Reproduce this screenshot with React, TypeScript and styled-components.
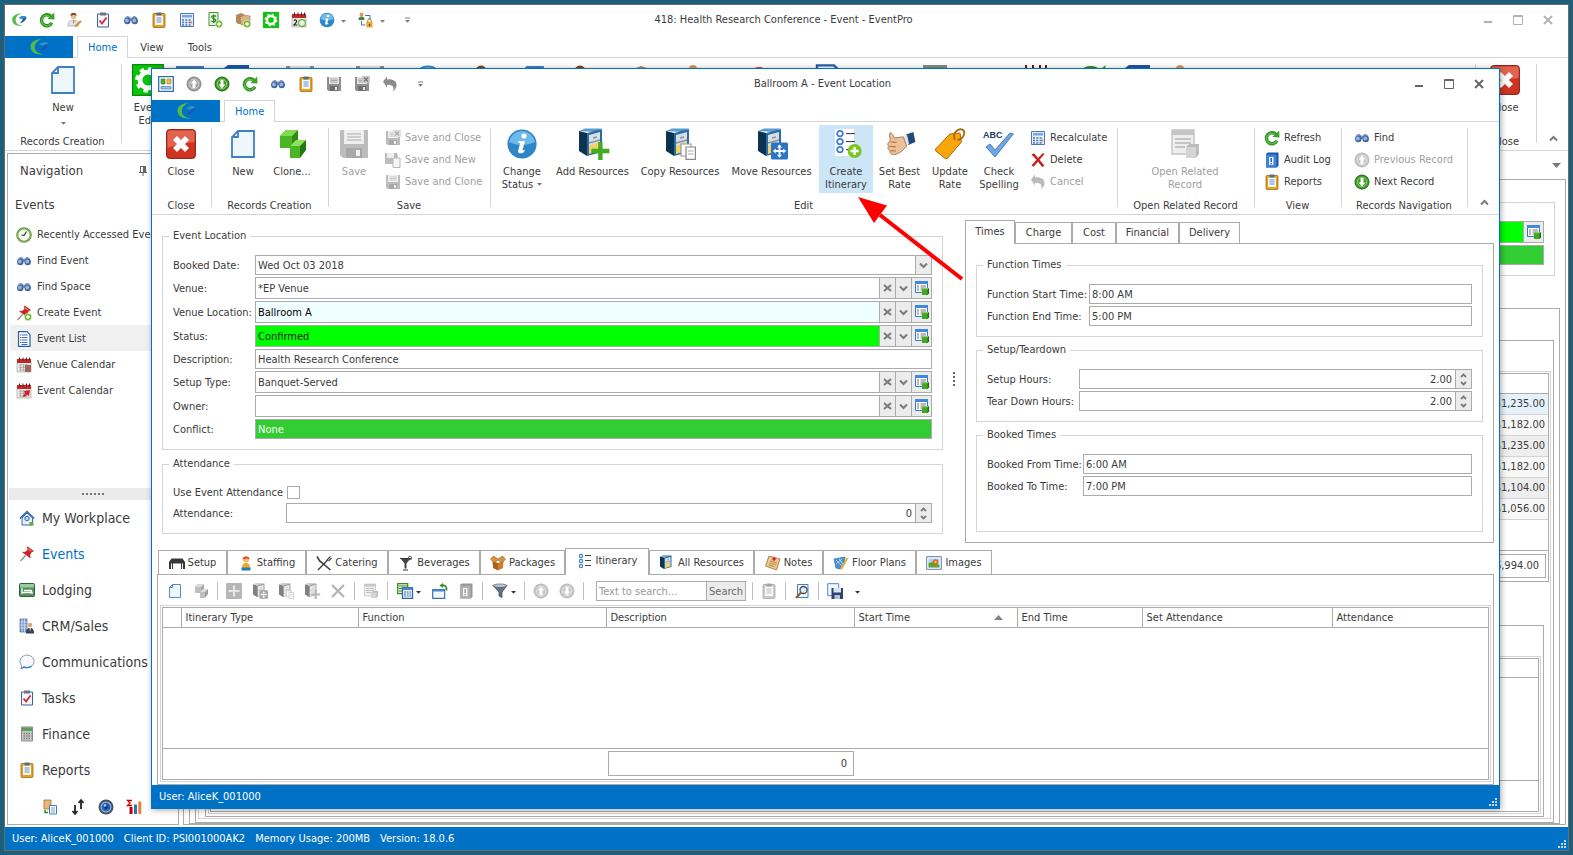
import React, { ReactNode } from 'react';
import styled, { createGlobalStyle, css } from 'styled-components';

const c = {
  desk: '#1e5f7c',
  frame: '#6b6b6b',
  blue: '#0072c6',
  line: '#d4d4d4',
  edge: '#ababab',
  text: '#3b3b3b',
  mute: '#a0a0a0',
  glyph: '#7a7a7a',
  btn: '#ececec',
};

const GlobalStyle = createGlobalStyle`
  * { box-sizing: border-box; }
  body {
    margin: 0;
    background: ${c.desk};
    color: ${c.text};
    font: 11px/14px "DejaVu Sans Condensed", "Noto Sans", sans-serif;
  }
  button, input, select { font: inherit; color: inherit; margin: 0; }
  button { padding: 0; border: 0; background: none; }
  ul { list-style: none; margin: 0; padding: 0; }
`;

/* ---------- Icons ---------- */

const cubes = (
  <>
    <path d="M2 4l3-3h6v6l-3 3H2z" fill="#2f8a14" />
    <path d="M2 4l3-3h6L8 4z" fill="#7fdc4f" />
    <path d="M2 4h6v6H2z" fill="#4cb526" />
    <path d="M7 9l3-3h5v5l-3 4H7z" fill="#26760f" />
    <path d="M7 9l3-3h5l-3 3z" fill="#8be45c" />
    <path d="M7 9h5v6H7z" fill="#4cb526" />
  </>
);
const floppy = (
  <>
    <path d="M1 1h14v14H2.500L1 13.500z" fill="#8f8f8f" />
    <path d="M3 1h10v7H3z" fill="#e4e4e4" />
    <path d="M4.500 3h7M4.500 4.500h7M4.500 6h7" stroke="#9a9a9a" strokeWidth=".8" />
    <path d="M4 10h8v5H4z" fill="#6e6e6e" />
    <path d="M9 11h2v3H9z" fill="#e8e8e8" />
  </>
);
const cabinet = (
  <>
    <path d="M1 1.500L4 .3h8.500L9 2z" fill="#5b9bd0" />
    <path d="M1 1.500l4 1V14L1 11.500z" fill="#0c3350" />
    <path d="M5 2.500l7.500-2V12L5 14z" fill="#2c6ea3" />
    <path d="M6 3.500l5.500-1.500v9.300L6 12.800z" fill="#d7dee4" />
    <path d="M6 7.500l5.500-1.500M8 5l2-.5M8 9l2-.5" stroke="#8494a0" strokeWidth=".7" />
    <path d="M6 9l5-2v4.500L6 13z" fill="#f3d164" />
  </>
);
const clipboard = (
  <>
    <rect x="2" y="1.500" width="12" height="14" rx="1" fill="#e3a21f" stroke="#a8690a" strokeWidth=".8" />
    <path d="M4 3.500h8v9.500H4z" fill="#f4f8fd" />
    <path d="M5.500 .5h5v3h-5z" fill="#5a6b85" />
    <path d="M5.500 6h5M5.500 8h5M5.500 10h5" stroke="#6f93c4" strokeWidth="1" />
  </>
);
const calRed = (
  <>
    <path d="M1 4h14v11H1z" fill="#e9e9e9" stroke="#9a9a9a" strokeWidth=".6" />
    <path d="M1 2h14v4H1z" fill="#c22727" />
    <path d="M3.500 .5v3M7 .5v3M10.500 .5v3M13.500 .5v3" stroke="#6d1414" strokeWidth="1" />
  </>
);
const calGrid = <path d="M3 8h10M3 10.500h10M3 13h10M4.500 7v7M7.500 7v7M10.500 7v7" stroke="#9e9e9e" strokeWidth=".7" />;
const doc = (
  <path d="M5.500 1.500h8v13h-11v-10z M5.500 1.500v3h-3" fill="#eef6fe" stroke="#3f7fc4" strokeWidth=".9" />
);
const pin = (
  <>
    <path d="M1.500 15l5-5.500" stroke="#8a8a8a" strokeWidth="1.200" />
    <path d="M8.500 .8l6 4.200-2.300 1.300-1.500 3 .8 2.700-8-5.800 2.500.1 2.500-2z" fill="#d42020" stroke="#8f1010" strokeWidth=".5" />
    <path d="M8.500 1.800l4.500 3.100-1.500.6-3.300-2.300z" fill="#f07a70" />
  </>
);
const addBadge = (
  <>
    <circle cx="12" cy="12" r="3.700" fill="#6fb927" stroke="#fff" strokeWidth=".5" />
    <path d="M12 10v4M10 12h4" stroke="#fff" strokeWidth="1.300" />
  </>
);
const tableSheet = (
  <>
    <path d="M1.500 1.500h12v11h-12z" fill="#fff" stroke="#2d7ad1" />
    <path d="M1 1h13v3H1z" fill="#3c8be0" />
    <path d="M3 6h2M6.500 6h5.500M3 8h2M6.500 8h5.500M3 10h2M6.500 10h5.500" stroke="#777" strokeWidth="1" />
  </>
);
const swoosh = (
  <>
    <path d="M10.500 1.500C5 1.500 1 4 1.200 8c.2 4.500 5 6.800 10.800 5.700C7.500 13.500 4.600 11.500 4.600 8c0-3 2.400-5.500 5.900-6.500z" fill="#55b948" />
    <path d="M8 6c2-2.500 5.500-2.700 7.500-.8-.3 3-3 5.300-7 6 1.800-1.300 2.800-2.500 3-4.200z" fill="#1b57ad" />
    <path d="M8 6c2-2.500 5.500-2.700 7.500-.8L11.300 7z" fill="#2e91c9" />
  </>
);
const circleArrow = (fill: string, ring: string, d: string) => (
  <>
    <circle cx="8" cy="8" r="7" fill={fill} stroke={ring} />
    <circle cx="8" cy="8" r="4.700" fill="none" stroke="#fff" strokeOpacity=".45" />
    <path d={d} fill="#fff" />
  </>
);
const upArrow = 'M8 3.500l3.500 4H9.500v4.500h-3V7.500H4.500z';
const downArrow = 'M8 12.500l3.500-4H9.500V4h-3v4.500H4.500z';

const art: Record<string, ReactNode> = {
  logo: swoosh,
  refresh: (
    <>
      <path d="M12.800 10.800a5.500 5.500 0 1 1-.8-6.300" fill="none" stroke="#2f8f22" strokeWidth="3.400" />
      <path d="M12.500 10.500a5.200 5.200 0 1 1-1-5.500" fill="none" stroke="#63c04a" strokeWidth="1.200" />
      <path d="M8.300 7L15.500 7.500 15.200 .5z" fill="#3aa528" />
    </>
  ),
  userEdit: (
    <>
      <circle cx="6.500" cy="4" r="3" fill="#e8bd8b" />
      <path d="M3.500 4a3 3.200 0 0 1 6 0c-1-1.500-4-1.500-6 0z" fill="#7a4a1c" />
      <path d="M1 14c0-4 2-6 5.500-6s5 2 5 6z" fill="#e0e6ee" stroke="#8a95a5" strokeWidth=".6" />
      <path d="M6 8.500l.7 4 .8-4z" fill="#b05a20" />
      <path d="M8 14.500l6-5.500" stroke="#e08a2c" strokeWidth="2" />
    </>
  ),
  task: (
    <>
      <path d="M2.500 2h11v13h-11z" fill="#f2f6fc" stroke="#3e6396" />
      <path d="M5 .5h6v3H5z" fill="#6d7480" />
      <path d="M4.500 8.500l2.500 3 4.500-6" fill="none" stroke="#d22b2b" strokeWidth="1.800" />
    </>
  ),
  binoculars: (
    <>
      <path d="M2.500 5l2.500-1.200L8 6l3-2.200L13.500 5l1.500 4H1z" fill="#6f8fbd" />
      <circle cx="4.300" cy="9" r="3.200" fill="#44659a" />
      <circle cx="11.700" cy="9" r="3.200" fill="#44659a" />
      <circle cx="3.900" cy="8.500" r="1.900" fill="#93b6de" />
      <circle cx="11.300" cy="8.500" r="1.900" fill="#93b6de" />
    </>
  ),
  clipboard,
  calc: (
    <>
      <path d="M1.500 1.500h13v13h-13z" fill="#e6effa" stroke="#4a78b8" />
      <path d="M3 3h10v2.500H3z" fill="#7da7dc" />
      <path d="M3 8h10M3 10.500h10M3 13h10" stroke="#4a78b8" strokeWidth="1.500" strokeDasharray="2 1.300" />
      <path d="M11 9.700h2.200v1.600H11z" fill="#e07a2c" />
    </>
  ),
  dollar: (
    <>
      <path d="M2 .5h9v13H2z" fill="#e8f4e4" stroke="#4a8f3c" />
      <path d="M9 4.500C8 3.200 4.500 3.500 4.700 5.200 5 7 8.800 6.200 8.800 8.300 8.600 10 5.500 10.200 4.300 8.800M6.700 2.500v8.500" fill="none" stroke="#2e8a22" strokeWidth="1.300" />
      {addBadge}
    </>
  ),
  boxes: (
    <>
      <path d="M1 3l5-2 3 1v10H3L1 10z" fill="#b58a5a" />
      <path d="M5 5l4-2 6 1v9H6z" fill="#d9b485" stroke="#94683a" strokeWidth=".5" />
      {addBadge}
    </>
  ),
  gear: (
    <>
      <path d="M.3.300h15.400v15.400H.3z" fill="#0ac50a" stroke="#0a8a0a" strokeWidth=".6" />
      <circle cx="8" cy="8" r="4" fill="none" stroke="#fff" strokeWidth="2.400" />
      <circle cx="8" cy="8" r="5.600" fill="none" stroke="#fff" strokeWidth="1.600" strokeDasharray="2.200 2.200" />
    </>
  ),
  calDay: (
    <>
      {calRed}
      <path d="M3 8.500c1.500-1.500 3.500 0 2.200 1.800L3 13h3.500" fill="none" stroke="#222" strokeWidth="1.200" />
      <circle cx="11" cy="11" r="3.400" fill="#e5f4d8" stroke="#6fae3a" strokeWidth="1.200" />
    </>
  ),
  info: (
    <>
      <circle cx="8" cy="8" r="7.300" fill="#2f86c6" />
      <path d="M1.500 7a6.600 6.600 0 0 1 13 0c-4 2-9 2-13 0z" fill="#6fb9ea" />
      <circle cx="9" cy="4" r="1.300" fill="#fff" />
      <path d="M6.300 6.500h3.200L8.200 11.300l1.200-.4-.4 1.200c-1.500.9-3.300.7-2.900-.9l1-3.700h-1z" fill="#fff" />
    </>
  ),
  orgLock: (
    <>
      <circle cx="3.500" cy="2.500" r="2" fill="#d39a5c" />
      <path d="M.5 8c0-2.500 1-3.500 3-3.500s3 1 3 3.500z" fill="#47853a" />
      <path d="M7 3.500h5v4M3.500 9v4h4" fill="none" stroke="#3e73b5" />
      <path d="M9.800 10V8.500a1.700 1.700 0 0 1 3.400 0V10" fill="none" stroke="#a0701c" />
      <path d="M8.500 10h6v5.500h-6z" fill="#efa12d" />
      <path d="M11.500 12v2" stroke="#6b3f00" />
    </>
  ),
  form: (
    <>
      <path d="M.7.700h14.600v14.600H.7z" fill="#fff" stroke="#2f6fb0" strokeWidth="1.300" />
      <path d="M3 3h4v5H3z" fill="#58a83a" stroke="#2f7a1a" strokeWidth=".6" />
      <path d="M9 3h4v5H9z" fill="#f2b84a" stroke="#a87a1a" strokeWidth=".6" />
      <path d="M3 10.500h10v2.500H3z" fill="#9cc3ec" stroke="#3a70b0" strokeWidth=".6" />
    </>
  ),
  up: circleArrow('#a2a2a2', '#858585', upArrow),
  down: circleArrow('#3a9d1f', '#1f6b10', downArrow),
  downGrey: circleArrow('#a2a2a2', '#858585', downArrow),
  floppy,
  floppyX: (
    <>
      {floppy}
      <path d="M8 0h8v7H8z" fill="#c9c9c9" />
      <path d="M10 1.500l4 4M14 1.500l-4 4" stroke="#777" strokeWidth="1.300" />
    </>
  ),
  floppyDoc: (
    <>
      <path d="M0 1h12v11H0z" fill="#8f8f8f" />
      <path d="M2 1h7v5H2z" fill="#e4e4e4" />
      <path d="M8 6h7v9.500H8z" fill="#f1f1f1" stroke="#8a8a8a" />
      <path d="M12 2v4" stroke="#777" />
    </>
  ),
  undo: (
    <path d="M1 5.500l4-5v3c5.500-.8 9.500 1.500 9.500 5.500 0 2.700-1.500 4.700-3.500 6.500 1.500-4.500 0-7-6-6.800v3z" fill="#8c8c8c" />
  ),
  closeRed: (
    <>
      <rect x=".8" y=".8" width="14.400" height="14.400" rx="1.500" fill="#cf3421" stroke="#8a1a0e" strokeWidth=".5" />
      <path d="M1.200 2.200q0-1 1-1h11.600q1 0 1 1V7q-7 .5-13.600 3z" fill="#e2634f" />
      <path d="M5 5l6 6M11 5l-6 6" stroke="#fff" strokeWidth="2.800" />
    </>
  ),
  doc,
  cubes,
  cabinet,
  cabinetAdd: (
    <>
      {cabinet}
      <path d="M11.700 7v9M7.200 11.500h9" stroke="#42ab22" strokeWidth="2.200" />
    </>
  ),
  cabinetCopy: (
    <>
      {cabinet}
      <path d="M8.500 8h5v6h-5z" fill="#fff" stroke="#999" strokeWidth=".6" />
      <path d="M11 9.500h4.700v6.200H11z" fill="#fff" stroke="#888" strokeWidth=".6" />
      <path d="M12 11.500h2.700M12 13h2.700" stroke="#aaa" strokeWidth=".6" />
    </>
  ),
  cabinetMove: (
    <>
      {cabinet}
      <rect x="7.500" y="7.300" width="8.500" height="8.500" rx=".8" fill="#2b76c4" />
      <path d="M11.750 8.800v5.500M9 11.500h5.500" stroke="#fff" strokeWidth=".9" />
      <path d="M10.500 9.700l1.250-1.500L13 9.700zM10.500 13.400l1.250 1.500 1.250-1.500zM9.900 10.200l-1.500 1.300 1.500 1.300zM13.600 10.200l1.500 1.300-1.500 1.300z" fill="#fff" />
    </>
  ),
  itinAdd: (
    <>
      <path d="M2.500 .5H12V14H2.500z" fill="#fff" />
      <g fill="none" stroke="#3f7fd0" strokeWidth=".9">
        <circle cx="5" cy="2.800" r="1.400" />
        <circle cx="5" cy="6.800" r="1.400" />
        <circle cx="5" cy="10.800" r="1.400" />
      </g>
      <path d="M8 2.800h4.500M8 6.800h4.500M8 10.800h1" stroke="#333" strokeWidth=".5" />
      <circle cx="12.300" cy="11.500" r="3.500" fill="#79c61e" />
      <path d="M12.300 9.500v4M10.300 11.500h4" stroke="#fff" strokeWidth="1.200" />
    </>
  ),
  itin: (
    <>
      <g fill="none" stroke="#3f7fd0" strokeWidth="1.200">
        <circle cx="4" cy="3" r="1.600" />
        <circle cx="4" cy="8" r="1.600" />
        <circle cx="4" cy="13" r="1.600" />
      </g>
      <path d="M8 2.500h6M8 7.500h6M8 12.500h6" stroke="#444" strokeWidth="1" />
    </>
  ),
  thumb: (
    <>
      <path d="M11 3.300L14.700 2l1 5-3.500 1.500z" fill="#234a7c" />
      <path d="M10 4.200l1.500-.8 1 4.500-1.500 1z" fill="#dfe7f2" />
      <path d="M3 2.500c.8-.5 1.500.8 2.200 2.500l4.500-.6L11.300 9c-1.500 2-3.500 4-6.500 4.300-1.500 0-2-1-1.700-2-1.200-.4-1.500-1.300-.7-2.200-.9-.8-.6-1.800.5-2.200C3.500 5.500 2.300 3.500 3 2.500z" fill="#ecc09a" stroke="#9c6437" strokeWidth=".4" />
      <path d="M3.300 7l3 .2M2.800 9.200l3.200.2M3.500 11.300l2.500.2" stroke="#b0764a" strokeWidth=".6" />
    </>
  ),
  tag: (
    <>
      <path d="M.8 10.500L8 3l5-.5.700 4.500-7 8.200-.9.200L.9 11.500z" fill="#fba50d" stroke="#a8690a" strokeWidth=".5" />
      <path d="M10.500 6C8.800 2.500 12 0 14.200 .8c1.800 1 .8 4.700-2.500 5.200" fill="none" stroke="#a8690a" strokeWidth=".9" />
    </>
  ),
  spell: (
    <>
      <text x="0" y="5" fontSize="4.500" fontWeight="700" fontFamily="Liberation Sans, sans-serif" fill="#23395f">ABC</text>
      <path d="M1.500 9.500l2-1.500 2.500 3L13.500 2.500l1.700.5L6 14.500z" fill="#6fa6e4" stroke="#2d69b3" strokeWidth=".4" />
    </>
  ),
  del: <path d="M1.500 2.500l2.500-1.200 4 4.700L13 1l1.500 1L9.500 7.700l5 6-2.300 1.200L8 9.700 3.500 14.800 1.500 13.500l5-5.800z" fill="#c91d1d" />,
  delGrey: <path d="M2 2l12 12M14 2L2 14" stroke="#808080" strokeWidth="2.200" />,
  related: (
    <>
      <path d="M1.500 1h11v12h-11z" fill="#e3e3e3" stroke="#9a9a9a" strokeWidth=".7" />
      <path d="M1.500 1h11v2.500h-11z" fill="#9f9f9f" />
      <path d="M3 5.500h8M3 7.500h8M3 9.500h5" stroke="#888" strokeWidth=".8" />
      <path d="M8.500 9.500l1.500-1.500h5v5L13.500 15h-5z" fill="#8f8f8f" />
      <path d="M8.500 9.500h5V15h-5z" fill="#b8b8b8" />
    </>
  ),
  audit: (
    <>
      <path d="M2 2l2-1.500h10.500v13L13 15.500H2z" fill="#1f55a8" />
      <path d="M2 2.500h10.500v13H2z" fill="#3d84d8" />
      <path d="M5 5h4.500v8H5z" fill="#eaf3fd" />
      <path d="M7.200 6v4M7.200 11v1.200" stroke="#1f55a8" strokeWidth="1.400" />
    </>
  ),
  lookup: (
    <>
      {tableSheet}
      <path d="M8 9.500L9.500 8H15v5.500L13.500 15H8z" fill="#256e10" />
      <path d="M8 9.500h5.500V15H8z" fill="#43a821" />
      <path d="M8 9.500L9.500 8H15l-1.500 1.500z" fill="#7fd65a" />
    </>
  ),
  clock: (
    <>
      <circle cx="8" cy="8" r="6.800" fill="#f4f8ee" stroke="#5d8f35" strokeWidth="2" />
      <circle cx="8" cy="8" r="6.800" fill="none" stroke="#a8cd86" strokeWidth=".6" />
      <path d="M10.500 4.500L8 8.500 5.500 8" fill="none" stroke="#444" strokeWidth="1.200" />
    </>
  ),
  pinAdd: (
    <>
      {pin}
      {addBadge}
    </>
  ),
  pin,
  list: (
    <>
      <path d="M2.500 .7h8.500l3 3v11.600H2.500z" fill="#fff" stroke="#2460a8" strokeWidth="1.200" />
      <path d="M5.500 4h6M5.500 6.500h6M5.500 9h6M5.500 11.500h6M5.500 13.500h6" stroke="#2d6cd0" strokeWidth="1.200" />
      <path d="M4 4h1M4 6.500h1M4 9h1M4 11.500h1" stroke="#c33" strokeWidth="1.200" />
    </>
  ),
  calVenue: (
    <>
      {calRed}
      {calGrid}
      <path d="M9 8h6v7H9z" fill="#a5655a" />
    </>
  ),
  calEvent: (
    <>
      {calRed}
      {calGrid}
      <path d="M6.500 13.500l2.500-3-1.200-2.300L14 7l-1 6-2-1.500-2.500 2.500z" fill="#d42020" />
    </>
  ),
  house: (
    <>
      <path d="M3 8v7h10.500V8L8 3z" fill="#e6eefb" stroke="#3668ad" />
      <path d="M.8 8.500L8 1.500l7.200 7" fill="none" stroke="#3668ad" strokeWidth="1.600" />
      <circle cx="8" cy="8.500" r="2.200" fill="#b9d3f3" stroke="#3668ad" />
      <path d="M10.500 12h4v3.500h-4z" fill="#63ae3b" />
    </>
  ),
  bed: (
    <>
      <rect x=".5" y="1.500" width="15" height="13" rx="1" fill="#4f9158" stroke="#2f6238" />
      <path d="M1 2h14v3.500H1z" fill="#9ccaa0" />
      <path d="M3 6v6M3 10.500h10V12M5 8.500h7.500v2" fill="none" stroke="#fff" strokeWidth="1.300" />
    </>
  ),
  crm: (
    <>
      <path d="M1 1h7v13H1z" fill="#7c9cc9" stroke="#456a9e" strokeWidth=".7" />
      <path d="M3 1v13M5.500 1v13M1 4h7M1 7h7M1 10h7" stroke="#dbe6f5" strokeWidth=".7" />
      <circle cx="11" cy="7" r="2.300" fill="#e2a872" />
      <path d="M7 15.500c0-4 1.500-5.500 4-5.500s4 1.500 4 5.500z" fill="#3a3f4a" />
      <path d="M10.500 10l.5 4 .7-4z" fill="#fff" />
    </>
  ),
  bubble: (
    <>
      <path d="M8 1.200c4 0 7 2.600 7 6.200s-3 6.200-7 6.200c-1.200 0-2.300-.2-3.300-.6L2 14.500l.8-2.700C1.600 10.700 1 9.200 1 7.400 1 3.800 4 1.200 8 1.200z" fill="#f7fbff" stroke="#8a9bb0" strokeWidth="1" />
      <path d="M12.500 12.200c-2 1.300-5 1.800-7.500.9L2 14.500" fill="none" stroke="#2f78c4" strokeWidth="1.300" />
    </>
  ),
  finance: (
    <>
      <path d="M2.500 1h11v14h-11z" fill="#c9c9c9" stroke="#8a8a8a" />
      <path d="M3 1.500h10v3.500H3z" fill="#57a05c" />
      <path d="M4.500 7.500h8M4.500 10h8M4.500 12.500h8" stroke="#777" strokeWidth="1.300" strokeDasharray="1.500 1" />
    </>
  ),
  dbDoc: (
    <>
      <path d="M2 1h7v9H2z" fill="#e8b878" stroke="#a8702c" strokeWidth=".8" />
      <path d="M7.500 6.500h7v8.500h-7z" fill="#fff" stroke="#3f7fc4" />
      <path d="M9 9h4M9 11h4M9 13h4" stroke="#3f7fc4" strokeWidth=".7" />
      <path d="M3 11v2.500h3" fill="none" stroke="#2f9324" strokeWidth="1.500" />
    </>
  ),
  swap: (
    <>
      <path d="M11 1v9M5 15V6" stroke="#222" strokeWidth="1.800" />
      <path d="M8.500 4L11 1l2.500 3M2.500 12L5 15l2.500-3" fill="none" stroke="#222" strokeWidth="1.600" />
    </>
  ),
  orb: (
    <>
      <circle cx="8" cy="8" r="7.500" fill="#4a4e56" />
      <circle cx="8" cy="8" r="5.500" fill="#8cb2e4" />
      <circle cx="8" cy="8" r="4.300" fill="#1f5fc0" />
      <circle cx="8" cy="8" r="1.900" fill="#0f2f6c" />
      <circle cx="7" cy="6.500" r="1.300" fill="#a8d4f7" />
    </>
  ),
  stats: (
    <>
      <path d="M6 1.500H1.500L4 4 1.500 6.500H6" fill="none" stroke="#c00" strokeWidth="1.300" />
      <path d="M3.500 8h3v7h-3z" fill="#c00000" />
      <path d="M8 5.500h3V15H8z" fill="#2f74b5" />
      <path d="M12.300 2.500h3V15h-3z" fill="#ed7d31" />
    </>
  ),
  deskTable: <path d="M2.500 3.500h11L16 7v7h-2V8.500h-1V14h-1V8.500H4V14H3V8.500H2V14H0V7z" fill="#383838" />,
  person: (
    <>
      <circle cx="8" cy="4.500" r="3" fill="#f5b878" />
      <path d="M4.500 4.500C4 .5 12 .5 11.500 4.500c-1.500-1.500-5-1.500-7 0z" fill="#e8401c" />
      <path d="M4 14c0-4 1-6 4-6s4 2 4 6z" fill="#f6a623" />
      <path d="M3.500 15.500v-3h9v3z" fill="#2478c0" />
    </>
  ),
  cutlery: (
    <>
      <path d="M2 15L12 4.500" stroke="#3c3c3c" strokeWidth="1.300" />
      <path d="M11 5l3.500-3.700M12.500 6.200l3-3.200" stroke="#3c3c3c" strokeWidth="1.100" />
      <path d="M1 1.500C3 4 3 6 5 7l9.500 8" fill="none" stroke="#3c3c3c" strokeWidth="1.600" />
    </>
  ),
  martini: (
    <>
      <path d="M3 4h9L8.500 8.500v5h-2v-5z" fill="#444" />
      <path d="M2 3.500h11M5 15h5" stroke="#333" strokeWidth="1.200" />
      <circle cx="12" cy="3" r="1.800" fill="none" stroke="#555" strokeWidth=".9" />
    </>
  ),
  box: (
    <>
      <path d="M2.500 6l5.500 2v7.500l-5-2.500z" fill="#a9621e" />
      <path d="M13.500 6L8 8v7.500l5-2.500z" fill="#c97f2e" />
      <path d="M.5 4l3-3L8 4l4.500-3 3 3L12 8 8 5 4 8z" fill="#d9913c" stroke="#8a4a10" strokeWidth=".5" />
    </>
  ),
  note: (
    <>
      <path d="M4 1l11 3-3.500 11L.5 11z" fill="#ecc98f" stroke="#a06a30" strokeWidth=".8" />
      <path d="M5 6l7 2M4.300 8l7 2M3.600 10l6 1.700" stroke="#a9773e" strokeWidth=".8" />
      <circle cx="9" cy="4" r="1.700" fill="#d42020" />
    </>
  ),
  plans: (
    <>
      <path d="M1 4l11-2-1 8-4 4-4-1z" fill="#4a92d6" stroke="#2663a3" strokeWidth=".6" />
      <path d="M3 5l6 6M6 3.500l4 6M3 9l6-5" stroke="#d6e8f8" strokeWidth=".7" />
      <path d="M8 14.500L14.500 3" stroke="#f2b52a" strokeWidth="2" />
    </>
  ),
  image: (
    <>
      <path d="M.7 1.700h14.600v12.600H.7z" fill="#fff" stroke="#5a7ea8" />
      <path d="M2.500 3.500h11v9h-11z" fill="#a9d3f5" />
      <path d="M2.500 8l4-1 7 3v2.500h-11z" fill="#5fa62f" />
      <circle cx="9.500" cy="7" r="2.700" fill="#d9631e" />
      <circle cx="9.500" cy="7" r="1.200" fill="#f8d14a" />
    </>
  ),
  plusSquare: (
    <>
      <rect x="0" y="0" width="16" height="16" rx="1" fill="#858585" />
      <path d="M8 2.500v11M2.500 8h11" stroke="#f2f2f2" strokeWidth="1.600" strokeDasharray="5 1" />
    </>
  ),
  tables: (
    <>
      <path d="M.7.700h10v10H.7z" fill="#e6f3dc" stroke="#3f8a22" strokeWidth="1.300" />
      <path d="M2 3h8M2 5.500h3M2 8h3" stroke="#3f8a22" strokeWidth="1.200" />
      <path d="M5.500 4.700h10v10.600h-10z" fill="#fff" stroke="#2b63a8" strokeWidth="1.300" />
      <path d="M5.500 4.500h10V7h-10z" fill="#4a86cf" />
      <path d="M7 9h7M7 11h7M7 13h7" stroke="#2b63a8" strokeWidth="1.200" strokeDasharray="2 .7" />
    </>
  ),
  windowBack: (
    <>
      <path d="M.7 6.700h12v8.600H.7z" fill="#f3f8fe" stroke="#3a70b5" strokeWidth="1.200" />
      <path d="M.7 6.500h12v2H.7z" fill="#4a86cf" />
      <path d="M10 2.500c3.500-.5 5 1 4.500 5" fill="none" stroke="#2f9324" strokeWidth="1.700" />
      <path d="M11 0v5L7.500 2.500z" fill="#2f9324" />
    </>
  ),
  funnel: (
    <>
      <path d="M1 2.500h14L10 9v5.500l-3-1.500V9z" fill="#5f7488" stroke="#333e49" strokeWidth=".7" />
      <ellipse cx="8" cy="2.700" rx="7" ry="1.700" fill="#c2ccd6" stroke="#333e49" strokeWidth=".6" />
    </>
  ),
  preview: (
    <>
      <path d="M3.500 1.500H14v13H3.500z" fill="#f1f7fe" stroke="#3f7fc4" />
      <circle cx="9.500" cy="7" r="3.500" fill="#dbe8f5" stroke="#4a4a4a" strokeWidth="1.300" />
      <path d="M7 9.500l-5 5.500" stroke="#8a5a2c" strokeWidth="2" />
    </>
  ),
  saveLayout: (
    <>
      <path d="M.7.700h11v12H.7z" fill="#f3f8fe" stroke="#4a86cf" />
      <path d="M4.500 5H16v11H4.500z" fill="#2c4370" />
      <path d="M6.500 5H14v4.500H6.500z" fill="#dbe4f2" />
      <path d="M7.500 12H13v4H7.500z" fill="#b3c2da" />
    </>
  ),
};

const Svg = styled.svg<{ $grey?: boolean }>`
  display: block;
  flex: none;
  overflow: visible;
  ${(p) => p.$grey && css`filter: grayscale(1) opacity(0.6);`}
`;

const Icon = ({ name, size = 16, grey }: { name: string; size?: number; grey?: boolean }) => (
  <Svg width={size} height={size} viewBox="0 0 16 16" $grey={grey} aria-hidden="true">
    {art[name]}
  </Svg>
);

const Caret = ({ bar, dark }: { bar?: boolean; dark?: boolean }) => (
  <Svg width="5" height="7" viewBox="0 0 5 7" aria-hidden="true">
    {bar && <path d="M0 1h5" stroke={c.glyph} />}
    <path d="M0 3h5L2.500 5.700z" fill={dark ? '#333' : c.glyph} />
  </Svg>
);

const Chevron = ({ up, small }: { up?: boolean; small?: boolean }) => (
  <Svg width={small ? 7 : 9} height={small ? 5 : 7} viewBox={small ? '0 0 7 5' : '0 0 9 7'} aria-hidden="true">
    {small ? (
      <path d={up ? 'M1 4L3.500 1.500 6 4' : 'M1 1L3.500 3.500 6 1'} fill="none" stroke={c.glyph} strokeWidth="1.800" />
    ) : (
      <path d={up ? 'M1 5.500L4.500 2 8 5.500' : 'M1 1.500L4.500 5 8 1.500'} fill="none" stroke={c.glyph} strokeWidth="2" />
    )}
  </Svg>
);

/* ---------- Window chrome ---------- */

const Desktop = styled.div`
  display: flex;
  min-height: 100vh;
  padding: 4px;
  background: ${c.desk};
`;

const MainWindow = styled.main`
  position: relative;
  display: flex;
  flex: 1;
  flex-direction: column;
  min-width: 0;
  border: 1px solid ${c.frame};
  background: #fff;
`;

const Popup = styled.section`
  position: absolute;
  top: 63px;
  right: 68px;
  bottom: 41px;
  left: 146px;
  display: flex;
  flex-direction: column;
  border: 1px solid ${c.blue};
  background: #fff;
  box-shadow: 1px 1px 6px rgba(0, 0, 0, 0.35);
`;

const TitleBar = styled.header`
  display: grid;
  flex: none;
  grid-template-columns: 1fr auto 1fr;
  align-items: center;
  height: 31px;
  padding: 0 12px 1px 6px;
`;

const QuickBar = styled.div`
  display: flex;
  align-items: center;
  gap: 12px;
`;

const ToolButton = styled.button<{ $w?: number }>`
  display: flex;
  align-items: center;
  justify-content: center;
  gap: 6px;
  min-width: ${(p) => p.$w ?? 16}px;
  height: 16px;
`;

const Title = styled.h1`
  margin: 0;
  font-size: 11px;
  font-weight: 400;
`;

const WindowButtons = styled.div<{ $dim?: boolean }>`
  display: flex;
  justify-content: flex-end;
  gap: 14px;
  opacity: ${(p) => (p.$dim ? 0.5 : 1)};
`;

const TabRow = styled.nav`
  display: flex;
  flex: none;
  height: 22px;
  box-shadow: inset 0 -1px 0 ${c.line};
`;

const AppButton = styled.button`
  display: flex;
  align-items: center;
  justify-content: center;
  width: 68px;
  margin-right: 4px;
  background: ${c.blue};
`;

const RibbonTab = styled.button<{ $active?: boolean }>`
  padding: 2px 12px 0;
  ${(p) =>
    p.$active &&
    css`
      padding: 1px 10px 0;
      border: 1px solid ${c.line};
      border-bottom: 0;
      background: #fff;
      color: ${c.blue};
    `}
`;

const Ribbon = styled.div`
  display: flex;
  flex: none;
  height: 93px;
  border-bottom: 1px solid ${c.line};
`;

const Group = styled.div<{ $w: number }>`
  display: flex;
  flex: none;
  flex-direction: column;
  width: ${(p) => p.$w}px;
  padding-top: 3px;
  background: linear-gradient(${c.line}, ${c.line}) no-repeat right 6px / 1px 79px;
`;

const GroupBody = styled.div<{ $pad?: number }>`
  display: flex;
  height: 68px;
  padding-left: ${(p) => p.$pad ?? 0}px;
`;

const GroupCaption = styled.div`
  margin-top: 6px;
  padding-right: 2px;
  text-align: center;
`;

const BigButton = styled.button<{ $w: number; $hot?: boolean }>`
  display: flex;
  flex: none;
  flex-direction: column;
  align-items: center;
  gap: 5px;
  width: ${(p) => p.$w}px;
  padding-top: 3px;
  line-height: 13px;
  white-space: pre;
  background: ${(p) => (p.$hot ? '#cde6f7' : 'none')};
  &:disabled { color: ${c.mute}; }
`;

const InlineCaret = styled.span`
  display: inline-block;
  padding-left: 4px;
  vertical-align: 1px;
`;

const SmallColumn = styled.div`
  display: flex;
  flex-direction: column;
  padding: 2px 0 0 6px;
`;

const SmallButton = styled.button`
  display: flex;
  flex: none;
  align-items: center;
  gap: 4px;
  height: 22px;
  white-space: nowrap;
  &:disabled { color: ${c.mute}; }
`;

const Collapse = styled.button`
  display: flex;
  align-items: flex-end;
  justify-content: center;
  width: 30px;
  margin-left: auto;
  padding-bottom: 8px;
`;

const StatusBar = styled.footer`
  display: flex;
  flex: none;
  align-items: center;
  gap: 10px;
  height: 23px;
  padding: 1px 2px 0 7px;
  background: ${c.blue};
  color: #fff;
`;

const Grip = styled.span`
  align-self: flex-end;
  margin-left: auto;
  padding-bottom: 2px;
`;

const SizeGrip = () => (
  <Grip>
    <Svg width="8" height="8" viewBox="0 0 8 8" aria-hidden="true">
      <path d="M6 0h2v2H6zM6 3h2v2H6zM3 3h2v2H3zM6 6h2v2H6zM3 6h2v2H3zM0 6h2v2H0z" fill="#c9d6e2" />
    </Svg>
  </Grip>
);

const ChromeButtons = ({ dim }: { dim?: boolean }) => (
  <WindowButtons $dim={dim}>
    <ToolButton aria-label="Minimize">
      <Svg width="10" height="10" viewBox="0 0 10 10"><path d="M1 7h8" stroke="#666" strokeWidth="2" /></Svg>
    </ToolButton>
    <ToolButton aria-label="Maximize">
      <Svg width="10" height="10" viewBox="0 0 10 10">
        <path d="M.5 .5h9v9h-9zM0 1.500h10" fill="none" stroke="#666" />
      </Svg>
    </ToolButton>
    <ToolButton aria-label="Close window">
      <Svg width="10" height="10" viewBox="0 0 10 10"><path d="M1 1l8 8M9 1L1 9" stroke="#666" strokeWidth="2" /></Svg>
    </ToolButton>
  </WindowButtons>
);

const Big = ({ icon, label = '', w, hot, disabled, caret }: {
  icon: string; label?: string; w: number; hot?: boolean; disabled?: boolean; caret?: boolean;
}) => (
  <BigButton $w={w} $hot={hot} disabled={disabled} aria-label={label || icon}>
    <Icon name={icon} size={32} grey={disabled} />
    <span>
      {label}
      {caret && <InlineCaret><Caret /></InlineCaret>}
    </span>
  </BigButton>
);

const Small = ({ icon, label, disabled }: { icon: string; label: string; disabled?: boolean }) => (
  <SmallButton disabled={disabled}>
    <Icon name={icon} grey={disabled} />
    {label}
  </SmallButton>
);

/* ---------- Navigation ---------- */

const Body = styled.div`
  display: flex;
  flex: 1;
  gap: 4px;
  min-height: 0;
  padding: 0 2px 2px;
`;

const Sidebar = styled.aside`
  display: flex;
  flex: none;
  flex-direction: column;
  width: 172px;
  margin-top: 2px;
  border: 1px solid ${c.edge};
`;

const NavTitle = styled.div`
  display: flex;
  align-items: center;
  justify-content: space-between;
  height: 34px;
  padding: 0 31px 0 12px;
  font-size: 13px;
`;

const NavHeading = styled.h2`
  margin: 0;
  padding-left: 7px;
  font-size: 13px;
  font-weight: 400;
  line-height: 33px;
`;

const NavList = styled.ul`
  flex: 1;
  margin: 0 2px;
`;

const NavLink = styled.a<{ $on?: boolean }>`
  display: flex;
  align-items: center;
  gap: 5px;
  height: 26px;
  padding: 2px 0 0 6px;
  overflow: hidden;
  background: ${(p) => (p.$on ? '#f0f0f0' : 'none')};
  color: inherit;
  text-decoration: none;
  white-space: nowrap;
`;

const NavSplitter = styled.div`
  display: flex;
  align-items: center;
  justify-content: center;
  height: 12px;
  margin: 0 1px;
  background: #ebebeb;
`;

const ModuleLink = styled.a<{ $on?: boolean }>`
  display: flex;
  align-items: center;
  gap: 7px;
  height: 36px;
  padding-left: 11px;
  color: ${(p) => (p.$on ? c.blue : 'inherit')};
  font-size: 14px;
  text-decoration: none;
`;

const ModuleIcons = styled.div`
  display: flex;
  align-items: center;
  gap: 12px;
  height: 36px;
  padding: 1px 0 0 34px;
`;

/* ---------- Event window behind the dialog ---------- */

const Workspace = styled.div`
  display: flex;
  flex: 1;
  flex-direction: column;
  min-width: 0;
`;

const WorkspaceBar = styled.div`
  display: flex;
  align-items: center;
  justify-content: flex-end;
  height: 28px;
  padding-right: 5px;
`;

const Frame = styled.div<{ $m?: string; $p?: string; $soft?: boolean; $grow?: boolean }>`
  display: flex;
  flex-direction: column;
  flex: ${(p) => (p.$grow ? '1' : 'none')};
  min-height: 0;
  margin: ${(p) => p.$m ?? '0'};
  padding: ${(p) => p.$p ?? '0'};
  border: 1px solid ${(p) => (p.$soft ? c.line : c.edge)};
`;

const AmountTable = styled.table`
  width: 100%;
  margin-bottom: 30px;
  border-collapse: collapse;
  text-align: right;
  th, td { height: 21px; padding: 0 3px 0 0; border-bottom: 1px solid ${c.line}; }
  th { height: 19px; border-color: ${c.edge}; }
  tbody tr:nth-child(odd) { background: #eeeeee; }
  tbody tr:nth-child(even) { background: #f8f8f8; }
  tbody tr:first-child { background: #e5f1fb; }
`;

const TotalRow = styled.div`
  min-height: 31px;
  margin-top: auto;
  padding: 3px 2px;
  border-top: 1px solid ${c.edge};
`;

const TotalBox = styled.div`
  height: 24px;
  padding-right: 6px;
  border: 1px solid ${c.edge};
  line-height: 22px;
  text-align: right;
`;

const EmptyHead = styled.div`
  height: 19px;
  border-bottom: 1px solid ${c.edge};
`;

/* ---------- Form controls ---------- */

const FormArea = styled.div`
  display: grid;
  flex: none;
  grid-template-columns: minmax(0, 1fr) 22px 529px;
  padding: 0 5px 5px 10px;
`;

const LeftForm = styled.div`
  display: flex;
  flex-direction: column;
  gap: 7px;
  padding: 14px 0 9px;
`;

const Box = styled.fieldset<{ $grow?: boolean }>`
  flex: ${(p) => (p.$grow ? '1' : 'none')};
  min-width: 0;
  margin: 0;
  padding: 12px 10px 10px;
  border: 1px solid ${c.line};
`;

const Legend = styled.legend`
  margin-left: -4px;
  padding: 0 4px;
  line-height: 14px;
`;

const Fields = styled.div<{ $label: number }>`
  display: grid;
  grid-template-columns: ${(p) => p.$label}px minmax(0, 1fr);
  row-gap: 2px;
  align-items: center;
  label { padding-top: 1px; white-space: nowrap; }
`;

const Control = styled.div<{ $tall?: boolean; $bg?: string; $fg?: string }>`
  display: flex;
  height: ${(p) => (p.$tall ? 22 : 20)}px;
  border: 1px solid ${c.edge};
  background: ${(p) => p.$bg ?? '#fff'};
  color: ${(p) => p.$fg ?? c.text};
`;

const inputStyle = css`
  flex: 1;
  min-width: 0;
  padding: 2px 3px 0 2px;
  border: 0;
  outline: 0;
  background: none;
`;

const Input = styled.input<{ $num?: boolean }>`
  ${inputStyle}
  text-align: ${(p) => (p.$num ? 'right' : 'left')};
`;

const Select = styled.select`
  ${inputStyle}
  appearance: none;
`;

const FieldButton = styled.button<{ $w: number }>`
  display: flex;
  flex: none;
  flex-direction: column;
  align-items: center;
  justify-content: center;
  gap: 3px;
  width: ${(p) => p.$w}px;
  border-left: 1px solid ${c.edge};
  background: ${c.btn};
`;

const SelectMark = styled(FieldButton).attrs({ as: 'span' })``;

const Check = styled.input`
  appearance: none;
  width: 13px;
  height: 13px;
  margin: 0 0 0 1px;
  border: 1px solid ${c.edge};
  background: #fff;
`;

const CheckRow = styled.div`
  display: flex;
  align-items: center;
  height: 18px;
`;

const SplitDots = styled.div`
  display: flex;
  align-items: center;
  justify-content: center;
`;

const TimesPane = styled.div`
  display: flex;
  flex-direction: column;
  padding-top: 5px;
`;

const TabStrip = styled.div`
  display: flex;
  align-items: flex-end;
`;

const Tab = styled.button<{ $w: number; $h: number; $active?: boolean }>`
  display: flex;
  flex: none;
  align-items: center;
  justify-content: center;
  gap: 3px;
  width: ${(p) => p.$w}px;
  height: ${(p) => p.$h}px;
  border: 1px solid ${c.edge};
  border-bottom: 0;
  background: #fff;
  white-space: nowrap;
  ${(p) =>
    p.$active &&
    css`
      position: relative;
      height: ${p.$h + 3}px;
      margin-bottom: -1px;
      padding-bottom: 2px;
    `}
`;

const TimesBody = styled.div`
  display: flex;
  flex: 1;
  flex-direction: column;
  gap: 6px;
  padding: 14px 10px 10px;
  border: 1px solid ${c.edge};
`;

const Lookup = ({ id, value, bg, fg }: { id: string; value: string; bg?: string; fg?: string }) => (
  <Control $tall $bg={bg} $fg={fg}>
    <Input id={id} defaultValue={value} />
    <FieldButton $w={16} aria-label="Clear">
      <Svg width="9" height="8" viewBox="0 0 9 8"><path d="M1 1l7 6M8 1L1 7" stroke={c.glyph} strokeWidth="2" /></Svg>
    </FieldButton>
    <FieldButton $w={16} aria-label="Choose"><Chevron /></FieldButton>
    <FieldButton $w={20} aria-label="Open record"><Icon name="lookup" /></FieldButton>
  </Control>
);

const Spin = ({ id, value }: { id: string; value: string }) => (
  <Control>
    <Input id={id} defaultValue={value} $num />
    <FieldButton $w={16} aria-label="Adjust value">
      <Chevron up small />
      <Chevron small />
    </FieldButton>
  </Control>
);

const Plain = ({ id, value, bg, fg }: { id: string; value: string; bg?: string; fg?: string }) => (
  <Control $bg={bg} $fg={fg}>
    <Input id={id} defaultValue={value} />
  </Control>
);

/* ---------- Itinerary grid ---------- */

const Detail = styled.div`
  display: flex;
  flex: 1;
  flex-direction: column;
  min-height: 0;
  padding: 0 5px;
`;

const DetailTabs = styled(TabStrip)`
  padding-left: 1px;
`;

const DetailPane = styled.div`
  display: flex;
  flex: 1;
  flex-direction: column;
  padding: 0 2px 2px;
  border: 1px solid ${c.edge};
`;

const Toolbar = styled.div`
  display: flex;
  align-items: center;
  height: 30px;
  padding: 2px 0 0 2px;
`;

const ToolbarButton = styled.button<{ $w?: number }>`
  display: flex;
  flex: none;
  align-items: center;
  justify-content: center;
  gap: 3px;
  width: ${(p) => p.$w ?? 26}px;
  height: 20px;
`;

const Separator = styled.span`
  width: 1px;
  height: 18px;
  margin: 0 3px;
  background: #c0c0c0;
`;

const Search = styled.form`
  display: flex;
  width: 150px;
  height: 20px;
  margin: 0 3px 0 9px;
  border: 1px solid ${c.edge};
  input::placeholder { color: #999; }
`;

const SearchButton = styled.button`
  padding: 1px 1px 0;
  width: 39px;
  border-left: 1px solid ${c.edge};
  background: ${c.btn};
  color: #6a6a6a;
`;

const GridShell = styled.div`
  display: flex;
  flex: 1;
  padding: 1px;
  border: 1px solid ${c.line};
`;

const Grid = styled.div`
  display: flex;
  flex: 1;
  flex-direction: column;
  border: 1px solid ${c.edge};
`;

const HeadTable = styled.table`
  width: 100%;
  border-collapse: collapse;
  table-layout: fixed;
  th {
    height: 19px;
    padding: 1px 4px 0;
    border-bottom: 1px solid ${c.edge};
    border-left: 1px solid ${c.edge};
    font-weight: 400;
    text-align: left;
  }
  th:first-child { border-left: 0; }
`;

const SortCell = styled.span`
  display: flex;
  align-items: center;
  justify-content: space-between;
  padding-right: 10px;
`;

const GridFooter = styled.div`
  height: 31px;
  margin-top: auto;
  padding: 2px 0 3px 445px;
  border-top: 1px solid ${c.edge};
`;

const CountBox = styled.output`
  display: block;
  width: 246px;
  height: 25px;
  padding-right: 6px;
  border: 1px solid ${c.edge};
  line-height: 24px;
  text-align: right;
`;

const Pointer = styled.svg`
  position: absolute;
  top: 128px;
  left: 706px;
  overflow: visible;
  pointer-events: none;
`;

/* ---------- Data ---------- */

const mainQuick = ['logo', 'refresh', 'userEdit', 'task', 'binoculars', 'clipboard', 'calc', 'dollar', 'boxes', 'gear', 'calDay'];
const popupQuick: [string, boolean?][] = [
  ['form'], ['up'], ['down'], ['refresh'], ['binoculars'], ['clipboard'], ['floppy', true], ['floppyX', true], ['undo', true],
];
const eventTools: [string, number][] = [
  ['calc', 32], ['audit', 60], ['floppy', 68], ['floppy', 72], ['info', 44], ['userEdit', 68], ['doc', 28],
  ['userEdit', 74], ['boxes', 50], ['orgLock', 64], ['person', 50], ['list', 88], ['finance', 126],
  ['calDay', 74], ['refresh', 38], ['audit', 54], ['orgLock', 50],
];
const navItems = [
  ['clock', 'Recently Accessed Events'],
  ['binoculars', 'Find Event'],
  ['binoculars', 'Find Space'],
  ['pinAdd', 'Create Event'],
  ['list', 'Event List'],
  ['calVenue', 'Venue Calendar'],
  ['calEvent', 'Event Calendar'],
];
const modules = [
  ['house', 'My Workplace'],
  ['pin', 'Events'],
  ['bed', 'Lodging'],
  ['crm', 'CRM/Sales'],
  ['bubble', 'Communications'],
  ['task', 'Tasks'],
  ['finance', 'Finance'],
  ['clipboard', 'Reports'],
];
const amounts = ['$1,235.00', '$1,182.00', '$1,235.00', '$1,182.00', '$1,104.00', '$1,056.00'];
const timeTabs: [string, number][] = [['Times', 50], ['Charge', 57], ['Cost', 44], ['Financial', 63], ['Delivery', 61]];
const detailTabs: [string, string, number][] = [
  ['deskTable', 'Setup', 69],
  ['person', 'Staffing', 79],
  ['cutlery', 'Catering', 82],
  ['martini', 'Beverages', 92],
  ['box', 'Packages', 85],
  ['itin', 'Itinerary', 84],
  ['cabinet', 'All Resources', 105],
  ['note', 'Notes', 69],
  ['plans', 'Floor Plans', 93],
  ['image', 'Images', 76],
];
const columns: [string, number?][] = [
  ['', 18], ['Itinerary Type', 177], ['Function', 248], ['Description', 248], ['Start Time', 163],
  ['End Time', 125], ['Set Attendance', 190], ['Attendance'],
];

/* ---------- Screens ---------- */

const MainRibbon = () => (
  <Ribbon>
    <Group $w={117}>
      <GroupBody $pad={33}>
        <BigButton $w={50}>
          <Icon name="doc" size={32} />
          <span>New</span>
          <Caret />
        </BigButton>
      </GroupBody>
      <GroupCaption>Records Creation</GroupCaption>
    </Group>
    <Group $w={1354}>
      <GroupBody>
        <Big icon="gear" label={'Event\nEdit'} w={52} />
        {eventTools.map(([icon, w], i) => <Big key={i} icon={icon} w={w} />)}
      </GroupBody>
    </Group>
    <Group $w={61}>
      <GroupBody $pad={4}>
        <Big icon="closeRed" label="Close" w={50} />
      </GroupBody>
      <GroupCaption>Close</GroupCaption>
    </Group>
    <Collapse aria-label="Collapse ribbon"><Chevron up /></Collapse>
  </Ribbon>
);

const Navigation = () => (
  <Sidebar>
    <NavTitle>
      Navigation
      <Svg width="8" height="10" viewBox="0 0 8 10" aria-hidden="true">
        <path d="M1.500 0v6M0 6.500h8M4 7v3M2 .5h4.500" stroke="#666" fill="none" />
        <path d="M4 0h3v6H4z" fill="#666" />
      </Svg>
    </NavTitle>
    <NavHeading>Events</NavHeading>
    <NavList>
      {navItems.map(([icon, label]) => (
        <li key={label}>
          <NavLink href="#" $on={label === 'Event List'}><Icon name={icon} />{label}</NavLink>
        </li>
      ))}
    </NavList>
    <NavSplitter>
      <Svg width="22" height="2" viewBox="0 0 22 2" aria-hidden="true">
        <path d="M0 1h22" stroke="#777" strokeWidth="2" strokeDasharray="2 2" />
      </Svg>
    </NavSplitter>
    <ul>
      {modules.map(([icon, label]) => (
        <li key={label}>
          <ModuleLink href="#" $on={label === 'Events'}><Icon name={icon} />{label}</ModuleLink>
        </li>
      ))}
    </ul>
    <ModuleIcons>
      {['dbDoc', 'swap', 'orb', 'stats'].map((n) => (
        <ToolButton key={n} aria-label={n}><Icon name={n} /></ToolButton>
      ))}
    </ModuleIcons>
  </Sidebar>
);

const EventWorkspace = () => (
  <Workspace>
    <WorkspaceBar>
      <Svg width="9" height="5" viewBox="0 0 9 5" aria-hidden="true"><path d="M0 0h9L4.500 5z" fill={c.glyph} /></Svg>
    </WorkspaceBar>
    <Frame $grow $p="22px 0 0">
      <Frame $soft $m="0 10px 32px" $p="18px 10px 10px">
        <Fields $label={0}>
          <span />
          <Control $tall $bg="#00ff00">
            <Input aria-label="Event status" />
            <FieldButton $w={20} aria-label="Open status"><Icon name="lookup" /></FieldButton>
          </Control>
          <span />
          <Plain id="eventConflict" value="" bg="#32cd32" />
        </Fields>
      </Frame>
      <Frame $grow $m="0 5px" $p="31px 5px 0">
        <Frame $grow $p="30px 2px 3px">
          <Frame $grow $soft $p="1px">
            <Frame $m="0 0 43px">
              <AmountTable>
                <thead><tr><th aria-label="Amount" /></tr></thead>
                <tbody>{amounts.map((a, i) => <tr key={i}><td>{a}</td></tr>)}</tbody>
              </AmountTable>
              <TotalRow><TotalBox>$6,994.00</TotalBox></TotalRow>
            </Frame>
            <Frame $grow $m="0 5px" $p="30px 2px 2px">
              <Frame $soft $grow $p="1px">
                <Frame $grow>
                  <EmptyHead />
                  <TotalRow />
                </Frame>
              </Frame>
            </Frame>
          </Frame>
        </Frame>
      </Frame>
    </Frame>
  </Workspace>
);

const PopupRibbon = () => (
  <Ribbon>
    <Group $w={60}>
      <GroupBody $pad={3}><Big icon="closeRed" label="Close" w={52} /></GroupBody>
      <GroupCaption>Close</GroupCaption>
    </Group>
    <Group $w={117}>
      <GroupBody $pad={6}>
        <Big icon="doc" label="New" w={50} />
        <Big icon="cubes" label="Clone..." w={48} />
      </GroupBody>
      <GroupCaption>Records Creation</GroupCaption>
    </Group>
    <Group $w={162}>
      <GroupBody>
        <Big icon="floppy" label="Save" w={50} disabled />
        <SmallColumn>
          <Small icon="floppyX" label="Save and Close" disabled />
          <Small icon="floppyDoc" label="Save and New" disabled />
          <Small icon="floppy" label="Save and Clone" disabled />
        </SmallColumn>
      </GroupBody>
      <GroupCaption>Save</GroupCaption>
    </Group>
    <Group $w={627}>
      <GroupBody $pad={4}>
        <Big icon="info" label={'Change\nStatus'} w={54} caret />
        <Big icon="cabinetAdd" label="Add Resources" w={87} />
        <Big icon="cabinetCopy" label="Copy Resources" w={88} />
        <Big icon="cabinetMove" label="Move Resources" w={95} />
        <Big icon="itinAdd" label={'Create\nItinerary'} w={54} hot />
        <Big icon="thumb" label={'Set Best\nRate'} w={53} />
        <Big icon="tag" label={'Update\nRate'} w={48} />
        <Big icon="spell" label={'Check\nSpelling'} w={50} />
        <SmallColumn>
          <Small icon="calc" label="Recalculate" />
          <Small icon="del" label="Delete" />
          <Small icon="undo" label="Cancel" disabled />
        </SmallColumn>
      </GroupBody>
      <GroupCaption>Edit</GroupCaption>
    </Group>
    <Group $w={137}>
      <GroupBody><Big icon="related" label={'Open Related\nRecord'} w={134} disabled /></GroupBody>
      <GroupCaption>Open Related Record</GroupCaption>
    </Group>
    <Group $w={87}>
      <GroupBody $pad={3}>
        <SmallColumn>
          <Small icon="refresh" label="Refresh" />
          <Small icon="audit" label="Audit Log" />
          <Small icon="clipboard" label="Reports" />
        </SmallColumn>
      </GroupBody>
      <GroupCaption>View</GroupCaption>
    </Group>
    <Group $w={126}>
      <GroupBody $pad={6}>
        <SmallColumn>
          <Small icon="binoculars" label="Find" />
          <Small icon="up" label="Previous Record" disabled />
          <Small icon="down" label="Next Record" />
        </SmallColumn>
      </GroupBody>
      <GroupCaption>Records Navigation</GroupCaption>
    </Group>
    <Collapse aria-label="Collapse ribbon"><Chevron up /></Collapse>
  </Ribbon>
);

const LocationForm = () => (
  <LeftForm>
    <Box>
      <Legend>Event Location</Legend>
      <Fields $label={82}>
        <label htmlFor="booked">Booked Date:</label>
        <Control>
          <Select id="booked"><option>Wed Oct 03 2018</option></Select>
          <SelectMark $w={16}><Chevron /></SelectMark>
        </Control>
        <label htmlFor="venue">Venue:</label>
        <Lookup id="venue" value="*EP Venue" />
        <label htmlFor="location">Venue Location:</label>
        <Lookup id="location" value="Ballroom A" bg="#f0ffff" fg="#000" />
        <label htmlFor="status">Status:</label>
        <Lookup id="status" value="Confirmed" bg="#00ff00" fg="#1a1a1a" />
        <label htmlFor="description">Description:</label>
        <Plain id="description" value="Health Research Conference" />
        <label htmlFor="setup">Setup Type:</label>
        <Lookup id="setup" value="Banquet-Served" />
        <label htmlFor="owner">Owner:</label>
        <Lookup id="owner" value="" />
        <label htmlFor="conflict">Conflict:</label>
        <Plain id="conflict" value="None" bg="#32cd32" fg="#fff" />
      </Fields>
    </Box>
    <Box>
      <Legend>Attendance</Legend>
      <Fields $label={113}>
        <label htmlFor="useEvent">Use Event Attendance</label>
        <CheckRow><Check id="useEvent" type="checkbox" /></CheckRow>
        <label htmlFor="attendance">Attendance:</label>
        <Spin id="attendance" value="0" />
      </Fields>
    </Box>
  </LeftForm>
);

const TimesForm = () => (
  <TimesPane>
    <TabStrip role="tablist">
      {timeTabs.map(([label, w], i) => (
        <Tab key={label} role="tab" $w={w} $h={21} $active={i === 0}>{label}</Tab>
      ))}
    </TabStrip>
    <TimesBody>
      <Box>
        <Legend>Function Times</Legend>
        <Fields $label={102}>
          <label htmlFor="fs">Function Start Time:</label>
          <Plain id="fs" value="8:00 AM" />
          <label htmlFor="fe">Function End Time:</label>
          <Plain id="fe" value="5:00 PM" />
        </Fields>
      </Box>
      <Box>
        <Legend>Setup/Teardown</Legend>
        <Fields $label={92}>
          <label htmlFor="sh">Setup Hours:</label>
          <Spin id="sh" value="2.00" />
          <label htmlFor="th">Tear Down Hours:</label>
          <Spin id="th" value="2.00" />
        </Fields>
      </Box>
      <Box $grow>
        <Legend>Booked Times</Legend>
        <Fields $label={96}>
          <label htmlFor="bf">Booked From Time:</label>
          <Plain id="bf" value="6:00 AM" />
          <label htmlFor="bt">Booked To Time:</label>
          <Plain id="bt" value="7:00 PM" />
        </Fields>
      </Box>
    </TimesBody>
  </TimesPane>
);

const Tool = ({ icon, grey, caret, w }: { icon: string; grey?: boolean; caret?: boolean; w?: number }) => (
  <ToolbarButton aria-label={icon} disabled={grey} $w={w}>
    <Icon name={icon} grey={grey} />
    {caret && <Caret dark />}
  </ToolbarButton>
);

const ItineraryPane = () => (
  <Detail>
    <DetailTabs role="tablist">
      {detailTabs.map(([icon, label, w]) => (
        <Tab key={label} role="tab" $w={w} $h={24} $active={label === 'Itinerary'}>
          <Icon name={icon} />
          {label}
        </Tab>
      ))}
    </DetailTabs>
    <DetailPane>
      <Toolbar>
        <Tool icon="doc" />
        <Tool icon="cubes" grey />
        <Separator />
        <Tool icon="plusSquare" grey />
        <Tool icon="cabinetMove" grey />
        <Tool icon="cabinetCopy" grey />
        <Tool icon="cabinetAdd" grey />
        <Tool icon="delGrey" grey />
        <Separator />
        <Tool icon="related" grey />
        <Separator />
        <Tool icon="tables" caret w={36} />
        <Tool icon="windowBack" />
        <Tool icon="audit" grey />
        <Separator />
        <Tool icon="funnel" caret w={35} />
        <Separator />
        <Tool icon="up" grey />
        <Tool icon="downGrey" grey />
        <Separator />
        <Search>
          <Input aria-label="Search text" placeholder="Text to search..." />
          <SearchButton type="button">Search</SearchButton>
        </Search>
        <Separator />
        <Tool icon="clipboard" grey />
        <Separator />
        <Tool icon="preview" />
        <Separator />
        <Tool icon="saveLayout" />
        <ToolbarButton $w={18} aria-label="More"><Caret dark /></ToolbarButton>
      </Toolbar>
      <GridShell>
        <Grid>
          <HeadTable>
            <colgroup>{columns.map(([n, w]) => <col key={n} width={w} />)}</colgroup>
            <thead>
              <tr>
                {columns.map(([name]) => (
                  <th key={name}>
                    {name === 'Start Time' ? (
                      <SortCell>
                        {name}
                        <Svg width="9" height="5" viewBox="0 0 9 5"><path d="M0 5h9L4.500 0z" fill="#808080" /></Svg>
                      </SortCell>
                    ) : name}
                  </th>
                ))}
              </tr>
            </thead>
          </HeadTable>
          <GridFooter><CountBox>0</CountBox></GridFooter>
        </Grid>
      </GridShell>
    </DetailPane>
  </Detail>
);

export default function App() {
  return (
    <>
      <GlobalStyle />
      <Desktop>
        <MainWindow>
          <TitleBar>
            <QuickBar>
              {mainQuick.map((n) => <ToolButton key={n} aria-label={n}><Icon name={n} /></ToolButton>)}
              <ToolButton $w={27} aria-label="Information"><Icon name="info" /><Caret /></ToolButton>
              <ToolButton $w={27} aria-label="Security"><Icon name="orgLock" /><Caret /></ToolButton>
              <ToolButton $w={20} aria-label="Customize"><Caret bar /></ToolButton>
            </QuickBar>
            <Title>418: Health Research Conference - Event - EventPro</Title>
            <ChromeButtons dim />
          </TitleBar>
          <TabRow>
            <AppButton aria-label="Application menu"><Icon name="logo" size={20} /></AppButton>
            <RibbonTab $active>Home</RibbonTab>
            <RibbonTab>View</RibbonTab>
            <RibbonTab>Tools</RibbonTab>
          </TabRow>
          <MainRibbon />
          <Body>
            <Navigation />
            <EventWorkspace />
          </Body>
          <StatusBar>
            <span>User: AliceK_001000</span>
            <span>Client ID: PSI001000AK2</span>
            <span>Memory Usage: 200MB</span>
            <span>Version: 18.0.6</span>
            <SizeGrip />
          </StatusBar>

          <Popup role="dialog" aria-label="Event Location">
            <TitleBar>
              <QuickBar>
                {popupQuick.map(([n, grey]) => (
                  <ToolButton key={n} aria-label={n} disabled={grey}><Icon name={n} /></ToolButton>
                ))}
                <ToolButton $w={20} aria-label="Customize"><Caret bar /></ToolButton>
              </QuickBar>
              <Title>Ballroom A - Event Location</Title>
              <ChromeButtons />
            </TitleBar>
            <TabRow>
              <AppButton aria-label="Application menu"><Icon name="logo" size={20} /></AppButton>
              <RibbonTab $active>Home</RibbonTab>
            </TabRow>
            <PopupRibbon />
            <FormArea>
              <LocationForm />
              <SplitDots>
                <Svg width="2" height="14" viewBox="0 0 2 14" aria-hidden="true">
                  <path d="M1 0v14" stroke="#666" strokeWidth="2" strokeDasharray="2 2" />
                </Svg>
              </SplitDots>
              <TimesForm />
            </FormArea>
            <ItineraryPane />
            <StatusBar>
              <span>User: AliceK_001000</span>
              <SizeGrip />
            </StatusBar>
            <Pointer width="106" height="84" viewBox="0 0 106 84" aria-hidden="true">
              <path d="M22 18L104 82" stroke="#f00" strokeWidth="4" />
              <path d="M0 0l29 8.500L16 26z" fill="#f00" />
            </Pointer>
          </Popup>
        </MainWindow>
      </Desktop>
    </>
  );
}
